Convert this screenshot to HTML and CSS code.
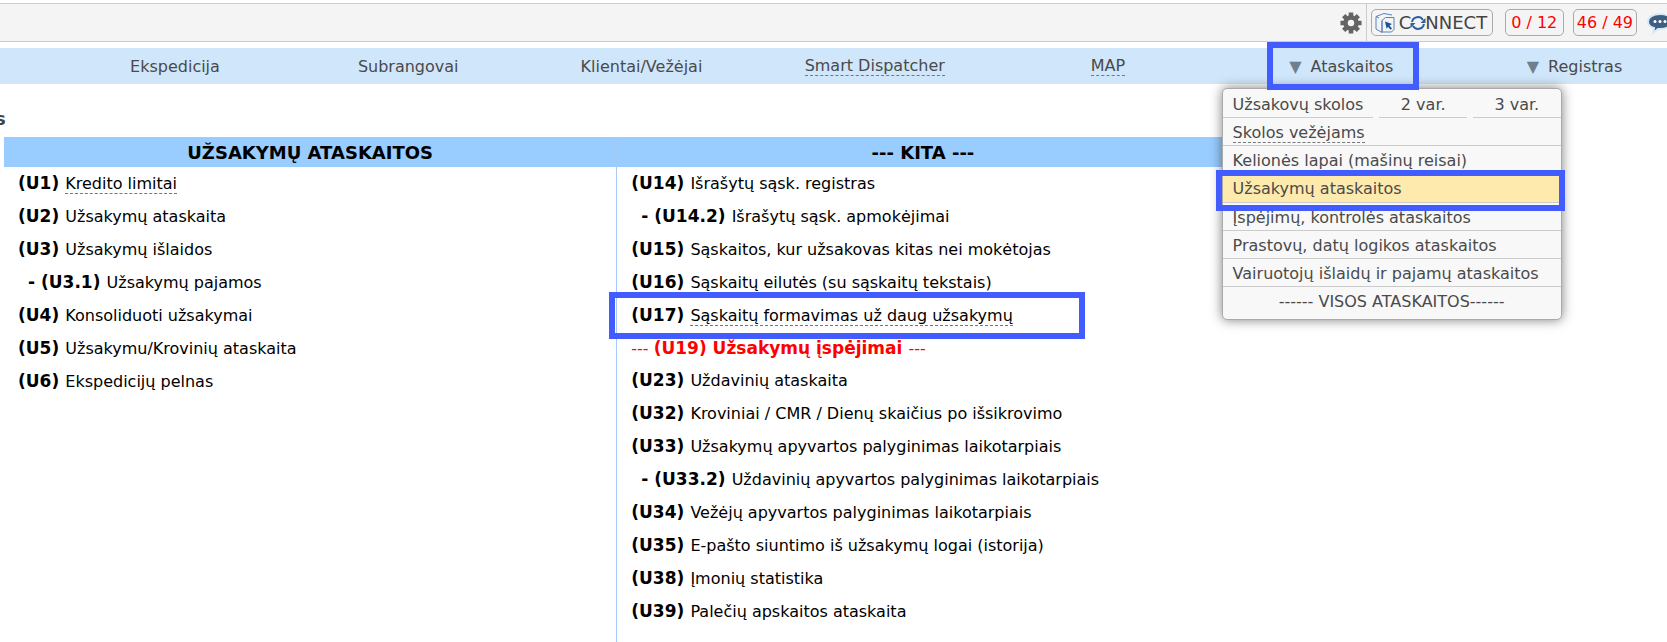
FILE: index.html
```html
<!DOCTYPE html>
<html lang="lt">
<head>
    <meta charset="utf-8">
    <title>Užsakymų ataskaitos</title>
    <link rel="stylesheet" href="styles.css">
</head>
<body>
    <header class="topbar">
        <button type="button" class="gear" aria-label="Nustatymai">
            <svg width="22" height="24" viewBox="0 0 24 24">
                <circle cx="12" cy="12" r="6" fill="none" stroke="#646464" stroke-width="5"/>
                <g stroke="#646464" stroke-width="5">
                    <path d="M12 .5V5M12 19v4.500M.5 12H5M19 12h4.500"/>
                    <path d="M4 4l3 3M17 17l3 3M4 20l3-3M17 7l3-3"/>
                </g>
            </svg>
        </button>
        <div class="tools">
            <button type="button" class="connect">
                <svg width="20" height="20" viewBox="0 0 20 20" fill="none" stroke="#5a80b8" stroke-width="1">
                    <path d="M1 3.500L9 .5l8 1.500M1 3.500V16l6 3.500V7.500M1 3.500l3 1.500"/>
                    <path d="M7 7.500L10.500 4.500h8.500v12l-2.500 2.500H7z"/>
                    <path fill="#1f4f9a" stroke="none" d="M10 8.500l7 2.500-2.500 1.500 2.500 3-1.500 1.200-2.500-3-1.300 2.300z"/>
                </svg>
                <span>C<svg class="sync" width="16" height="16" viewBox="0 0 16 16" fill="none" stroke="#2f5f9f" stroke-width="2">
                    <path d="M2 7a6 6 0 0 1 11-2M14 9a6 6 0 0 1-11 2"/>
                    <path fill="#2f5f9f" stroke="none" d="M15.500 3v5h-5zM.5 13V8h5z"/>
                </svg>NNECT</span>
            </button>
            <button type="button" class="counter">0 / 12</button>
            <button type="button" class="counter">46 / 49</button>
            <button type="button" class="chat" aria-label="Pokalbiai">
                <svg width="28" height="24" viewBox="0 0 28 24">
                    <path fill="#3f5f80" stroke="#d5ebfb" stroke-width="2" d="M14 3c7 0 12 3 12 7.500S21 18 14 18l-2 0-5 4 1-5C4 16 2 13.500 2 10.500 2 6 7 3 14 3z"/>
                    <g fill="#fff"><circle cx="9" cy="10.500" r="1.500"/><circle cx="14" cy="10.500" r="1.500"/><circle cx="19" cy="10.500" r="1.500"/></g>
                </svg>
            </button>
        </div>
    </header>

    <nav class="nav">
        <div class="nav-item"><a href="#">Ekspedicija</a></div>
        <div class="nav-item"><a href="#">Subrangovai</a></div>
        <div class="nav-item"><a href="#">Klientai/Vežėjai</a></div>
        <div class="nav-item"><a href="#" class="dashed">Smart Dispatcher</a></div>
        <div class="nav-item"><a href="#" class="dashed">MAP</a></div>
        <div class="nav-item">
            <a href="#" class="marked"><span class="arrow">▼</span> Ataskaitos</a>
            <div class="menu">
                <div class="menu-split">
                    <a href="#">Užsakovų skolos</a>
                    <a href="#">2 var.</a>
                    <a href="#">3 var.</a>
                </div>
                <a href="#"><span class="dashed">Skolos vežėjams</span></a>
                <a href="#">Kelionės lapai (mašinų reisai)</a>
                <a href="#" class="active marked">Užsakymų ataskaitos</a>
                <a href="#">Įspėjimų, kontrolės ataskaitos</a>
                <a href="#">Prastovų, datų logikos ataskaitos</a>
                <a href="#">Vairuotojų išlaidų ir pajamų ataskaitos</a>
                <a href="#" class="all">------ VISOS ATASKAITOS------</a>
            </div>
        </div>
        <div class="nav-item"><a href="#"><span class="arrow">▼</span> Registras</a></div>
    </nav>

    <main>
        <h1>s</h1>
        <div class="reports">
            <section>
                <h2>UŽSAKYMŲ ATASKAITOS</h2>
                <ul>
                    <li><b>(U1)</b> <a href="#" class="dashed">Kredito limitai</a></li>
                    <li><b>(U2)</b> <a href="#">Užsakymų ataskaita</a></li>
                    <li><b>(U3)</b> <a href="#">Užsakymų išlaidos</a></li>
                    <li class="sub"><b>- (U3.1)</b> <a href="#">Užsakymų pajamos</a></li>
                    <li><b>(U4)</b> <a href="#">Konsoliduoti užsakymai</a></li>
                    <li><b>(U5)</b> <a href="#">Užsakymu/Krovinių ataskaita</a></li>
                    <li><b>(U6)</b> <a href="#">Ekspedicijų pelnas</a></li>
                </ul>
            </section>
            <section>
                <h2>--- KITA ---</h2>
                <ul>
                    <li><b>(U14)</b> <a href="#">Išrašytų sąsk. registras</a></li>
                    <li class="sub"><b>- (U14.2)</b> <a href="#">Išrašytų sąsk. apmokėjimai</a></li>
                    <li><b>(U15)</b> <a href="#">Sąskaitos, kur užsakovas kitas nei mokėtojas</a></li>
                    <li><b>(U16)</b> <a href="#">Sąskaitų eilutės (su sąskaitų tekstais)</a></li>
                    <li class="marked"><b>(U17)</b> <a href="#" class="dashed">Sąskaitų formavimas už daug užsakymų</a></li>
                    <li class="warning">--- <b>(U19) <a href="#">Užsakymų įspėjimai</a></b> ---</li>
                    <li><b>(U23)</b> <a href="#">Uždavinių ataskaita</a></li>
                    <li><b>(U32)</b> <a href="#">Kroviniai / CMR / Dienų skaičius po išsikrovimo</a></li>
                    <li><b>(U33)</b> <a href="#">Užsakymų apyvartos palyginimas laikotarpiais</a></li>
                    <li class="sub"><b>- (U33.2)</b> <a href="#">Uždavinių apyvartos palyginimas laikotarpiais</a></li>
                    <li><b>(U34)</b> <a href="#">Vežėjų apyvartos palyginimas laikotarpiais</a></li>
                    <li><b>(U35)</b> <a href="#">E-pašto siuntimo iš užsakymų logai (istorija)</a></li>
                    <li><b>(U38)</b> <a href="#">Įmonių statistika</a></li>
                    <li><b>(U39)</b> <a href="#">Palečių apskaitos ataskaita</a></li>
                </ul>
            </section>
        </div>
    </main>
</body>
</html>
```
FILE: styles.css
```css
*, *::after {
    box-sizing: border-box;
}
body {
    margin: 0;
    padding-top: 3px;
    font-family: Verdana, "DejaVu Sans", sans-serif;
    font-size: 16px;
    color: #000;
    background-color: #fff;
    overflow: hidden;
}
a {
    color: inherit;
    text-decoration: none;
}
button {
    font-family: inherit;
    padding: 0;
    border: none;
    background: none;
}
svg {
    display: block;
}
.dashed {
    border-bottom: 1px dashed #777;
}

/* top bar */
.topbar {
    display: flex;
    justify-content: flex-end;
    height: 39px;
    background-color: #f4f4f4;
    border-top: 1px solid #ccc;
    border-bottom: 1px solid #ccc;
}
.gear {
    padding: 0 4px;
}
.tools {
    display: flex;
    align-items: center;
    border-left: 1px solid #ccc;
    padding-left: 4px;
    margin-right: -7px;
}
.connect, .counter {
    height: 27px;
    border: 1px solid #aaa;
    border-radius: 5px;
    background-color: #f4f4f4;
}
.connect {
    display: flex;
    align-items: center;
    gap: 4px;
    width: 122px;
    padding: 0 3px;
    margin-right: 12px;
    font-size: 18px;
    color: #444;
    white-space: nowrap;
}
.sync {
    display: inline-block;
    margin: 0 -1px;
    vertical-align: -2px;
}
.counter {
    min-width: 59px;
    padding: 0 3px;
    margin-right: 9px;
    font-size: 16px;
    color: #f00;
}

/* navigation */
.nav {
    display: grid;
    grid-template-columns: repeat(7, 14.5%);
    height: 36px;
    margin-top: 6px;
    padding-left: 3.5%;
    background-color: #d0e6fa;
    color: #4a4a4a;
}
.nav-item {
    position: relative;
    display: flex;
    justify-content: center;
    align-items: center;
}
.arrow {
    margin-right: 4px;
    color: #6f7f8f;
}

/* blue frame around the marked entries */
.marked {
    position: relative;
}
.marked::after {
    content: "";
    position: absolute;
    z-index: 3;
    inset: -15px -26px -14px -22px;
    border: 6px solid #435cff;
}

/* drop-down menu */
.menu {
    position: absolute;
    z-index: 2;
    top: 40px;
    left: -3px;
    width: 340px;
    padding-bottom: 4px;
    background-color: #f8f8f8;
    border: 1px solid #aaa;
    border-radius: 5px;
    box-shadow: 0 0 12px rgba(0, 0, 0, 0.5);
}
.menu a {
    display: block;
    height: 28px;
    padding: 0 10px;
    line-height: 29px;
    border-bottom: 1px solid #ccc;
    white-space: nowrap;
}
.menu-split {
    display: flex;
    gap: 6px;
}
.menu .menu-split a {
    height: 29px;
    line-height: 31px;
}
.menu-split a + a {
    flex: 1;
    text-align: center;
}
.menu .active {
    height: 29px;
    line-height: 30px;
    background-color: #ffeaad;
}
.menu .active::after {
    inset: -4px -4px -9px -7px;
}
.menu .all {
    border-bottom: none;
    text-align: center;
}

/* reports */
h1 {
    height: 53px;
    margin: 0;
    padding-top: 21px;
    font-size: 18px;
    line-height: 28px;
    text-indent: -5px;
    color: #444;
}
.reports {
    display: grid;
    grid-template-columns: 1fr 1fr;
    width: 73.7%;
    min-height: 505px;
    padding-left: 4px;
}
section + section {
    border-left: 1px solid #a8c8f8;
}
h2 {
    margin: 0;
    background-color: #99ccff;
    font-size: 18px;
    line-height: 31px;
    height: 30px;
    text-align: center;
}
ul {
    margin: 0;
    padding: 0;
    list-style: none;
}
li {
    height: 33px;
    padding-left: 14px;
    line-height: 33px;
    white-space: nowrap;
}
li b {
    margin-right: 1px;
    font-size: 17px;
}
.sub {
    padding-left: 24px;
}
.warning {
    height: 32px;
    line-height: 32px;
    color: #f00;
}
li.marked::after {
    inset: -7px auto auto -8px;
    width: 476px;
    height: 47px;
}
```
